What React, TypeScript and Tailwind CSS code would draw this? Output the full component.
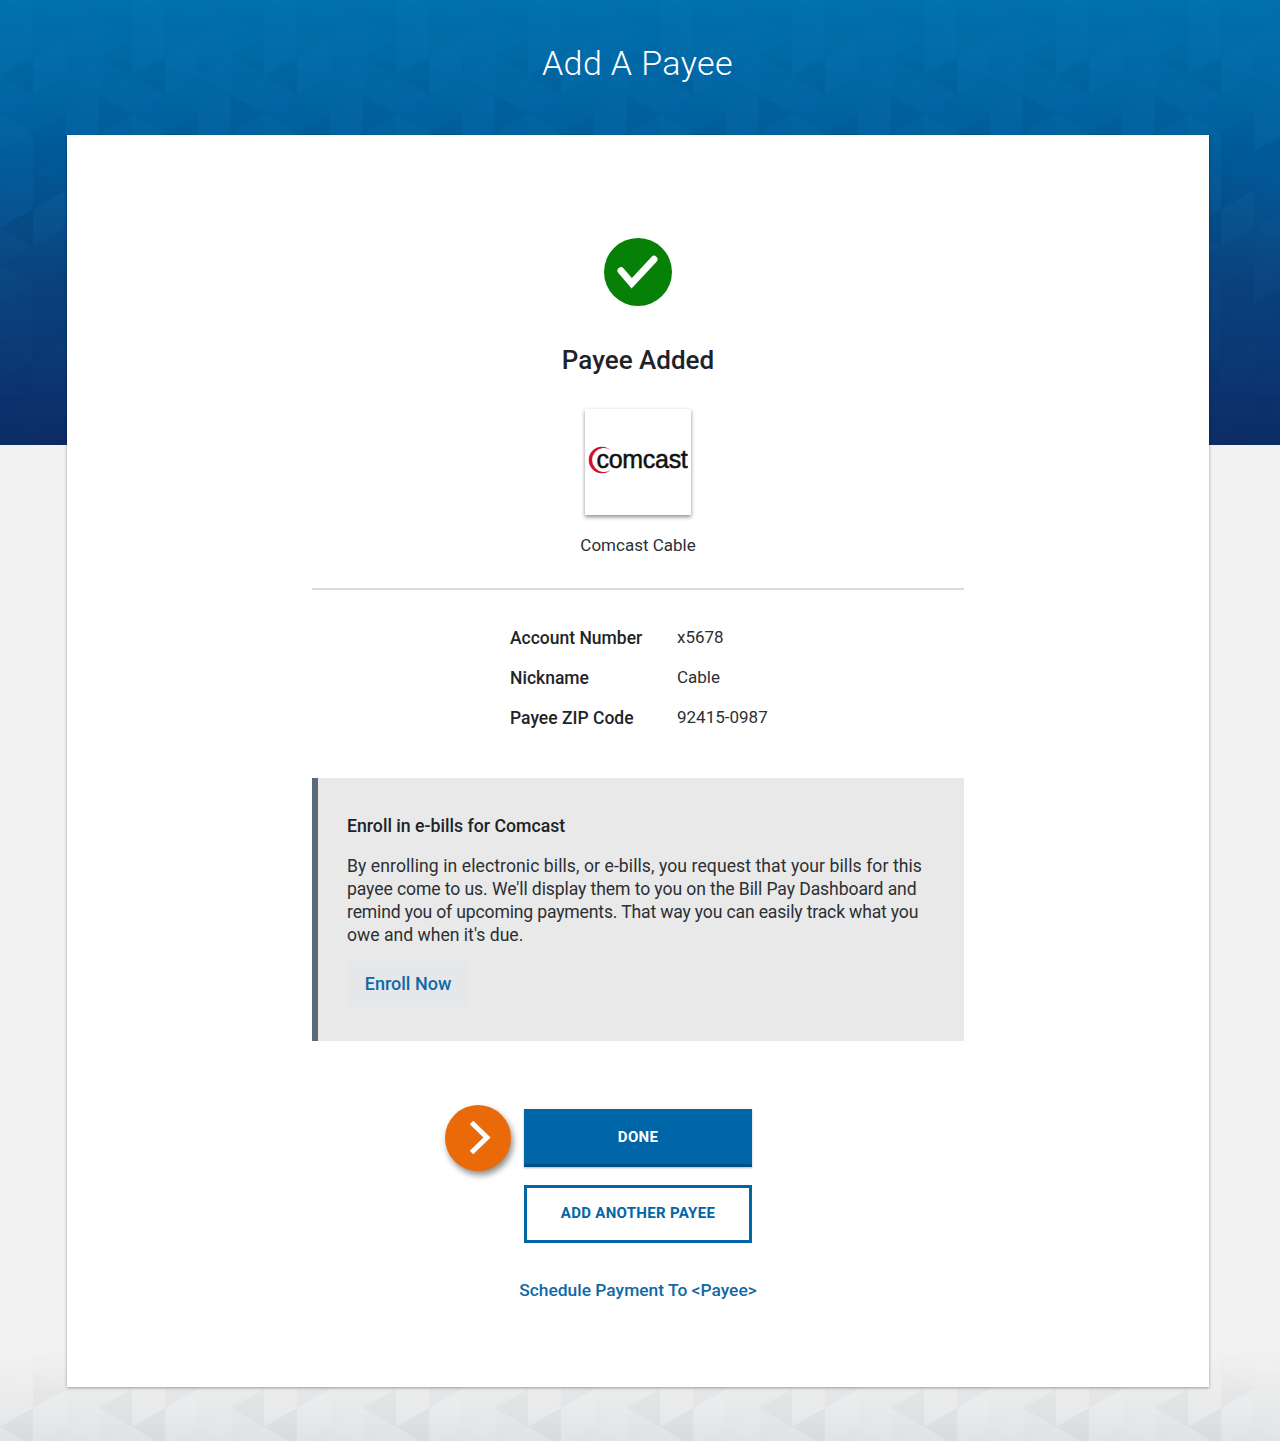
import React from "react";

function rnd(i: number, j: number) {
  const s = Math.sin(i * 12.9898 + j * 78.233) * 43758.5453;
  return s - Math.floor(s);
}

function Triangles({ width, height, dark, light, strength }: { width: number; height: number; dark: string; light: string; strength: number }) {
  const w = 33;
  const h = 38;
  const polys: React.ReactNode[] = [];
  for (let i = 0; i < Math.ceil(width / w) + 1; i++) {
    const ii = i % 4;
    const off = i % 2 ? -h / 2 : -h;
    for (let j = 0; j < Math.ceil(height / h) + 2; j++) {
      const jj = j % 4;
      const x = i * w;
      const y = off + j * h;
      const a = rnd(ii, jj);
      const b = rnd(ii + 40, jj + 17);
      polys.push(
        <polygon key={`a${i}-${j}`} points={`${x},${y} ${x},${y + h} ${x + w},${y + h / 2}`} fill={a > 0.5 ? dark : light} fillOpacity={Math.abs(a - 0.5) * strength} />,
        <polygon key={`b${i}-${j}`} points={`${x + w},${y + h / 2} ${x + w},${y + h * 1.5} ${x},${y + h}`} fill={b > 0.5 ? dark : light} fillOpacity={Math.abs(b - 0.5) * strength} />
      );
    }
  }
  return (
    <svg width={width} height={height} viewBox={`0 0 ${width} ${height}`} className="block">
      {polys}
    </svg>
  );
}

function Row({ label, value }: { label: string; value: string }) {
  return (
    <div className="flex h-10 items-center">
      <div className="w-[167px] text-[17.5px] font-medium text-[#1f2429]">{label}</div>
      <div className="text-[17px] text-[#2b3034]">{value}</div>
    </div>
  );
}

export default function App() {
  return (
    <div
      className="relative h-[1441px] w-[1280px] overflow-hidden bg-[#f2f2f2]"
      style={{ fontFamily: "Roboto, 'Noto Sans', sans-serif" }}
    >
      <div className="absolute left-0 top-0 h-[445px] w-full bg-[linear-gradient(180deg,#0072ae_0%,#00609f_30%,#0a4580_60%,#0d2c66_100%)]">
        <div className="[mask-image:linear-gradient(180deg,rgba(0,0,0,0.3)_0%,#000_25%,#000_50%,rgba(0,0,0,0.1)_90%)]">
          <Triangles width={1280} height={445} dark="#00204f" light="#3a9ad4" strength={0.12} />
        </div>
      </div>
      <div className="absolute bottom-0 left-0 h-[90px] w-full bg-[linear-gradient(180deg,#f2f2f2_0%,#e8e9ea_60%,#dfe1e3_100%)]">
        <div className="[mask-image:linear-gradient(180deg,transparent_0%,#000_50%)]">
          <Triangles width={1280} height={90} dark="#9a9ea3" light="#ffffff" strength={0.2} />
        </div>
      </div>

      <div className="relative">
        <h1 className="flex h-[135px] items-start justify-center pt-[41px] text-[34px] font-light leading-[45px] tracking-[0.4px] text-white">
          <span className="mr-[5px]">Add A Payee</span>
        </h1>

        <main className="mx-[67px] flex h-[1252px] w-[1142px] flex-col items-center bg-white pt-[103px] shadow-[0_1px_3px_rgba(0,0,0,0.35)]">
          <div className="flex h-[68px] w-[68px] items-center justify-center rounded-full bg-[#068006]">
            <svg width="44" height="44" viewBox="0 0 44 44" fill="none">
              <path d="M5 20.7 L15.7 33.3 L38 9.3" stroke="#fff" strokeWidth="7" strokeLinecap="round" strokeLinejoin="miter" />
            </svg>
          </div>

          <h2 className="mt-[36px] text-[26px] font-medium leading-[36px] text-[#1d2328]">Payee Added</h2>

          <div className="relative mt-[31px] flex h-[106px] w-[106px] items-center justify-center bg-white shadow-[0_2px_4px_rgba(0,0,0,0.45)]">
            <svg width="30" height="30" viewBox="0 0 30 30" className="absolute left-[1px] top-[36px]" fill="none">
              <path d="M25 5.2 A13.3 13.3 0 1 0 25 24.8 A12 12 0 1 1 25 5.2 Z" fill="#d0112f" />
            </svg>
            <span
              className="relative ml-[8px] mt-[-6px] text-[25px] leading-none tracking-[-0.3px] text-[#111] [-webkit-text-stroke:0.5px_#111]"
              style={{ fontFamily: "'Liberation Sans', sans-serif" }}
            >
              comcast
            </span>
          </div>

          <p className="mt-[18px] text-[17px] leading-[24px] text-[#2b3034]">Comcast Cable</p>

          <div className="mt-[31px] h-[2px] w-[652px] bg-[#dcdcdc]" />

          <div className="mt-[28px] w-[652px] pl-[198px]">
            <Row label="Account Number" value="x5678" />
            <Row label="Nickname" value="Cable" />
            <Row label="Payee ZIP Code" value="92415-0987" />
          </div>

          <section className="mt-[40px] h-[263px] w-[652px] border-l-[6px] border-[#5c6b77] bg-[#e9e9e9] pl-[29px] pr-[20px] pt-[36px]">
            <h3 className="text-[17.7px] font-medium leading-[24px] text-[#1d2328]">Enroll in e-bills for Comcast</h3>
            <p className="mt-[17px] whitespace-nowrap text-[17.6px] leading-[23px] text-[#2b3034]">
              <span className="block tracking-[0.07px]">By enrolling in electronic bills, or e-bills, you request that your bills for this</span>
              <span className="block tracking-[-0.1px]">payee come to us. We'll display them to you on the Bill Pay Dashboard and</span>
              <span className="block tracking-[-0.17px]">remind you of upcoming payments. That way you can easily track what you</span>
              <span className="block">owe and when it's due.</span>
            </p>
            <button className="mt-[14px] flex h-[46px] w-[122px] items-center justify-center rounded-[4px] bg-[#e5e7e9] pb-[1px] text-[18px] font-medium text-[#0f69a6]">
              Enroll Now
            </button>
          </section>

          <div className="relative mt-[68px]">
            <button className="flex h-[58px] w-[228px] items-center justify-center border-b-[3px] border-[#004f85] bg-[#0066a8] pt-[2px] text-[15px] font-bold tracking-[0.3px] text-white shadow-[0_1px_2px_rgba(0,0,0,0.3)]">
              DONE
            </button>
            <div className="absolute left-[-79px] top-[-4px] flex h-[66px] w-[66px] items-center justify-center rounded-full bg-[#ea6a0a] shadow-[2px_4px_6px_rgba(0,0,0,0.45)]">
              <svg width="30" height="40" viewBox="0 0 30 40" fill="none" className="ml-[1px]">
                <path d="M7.5 4.5 L23 19.5 L7.5 34.5" stroke="#fff" strokeWidth="5" strokeLinejoin="miter" />
              </svg>
            </div>
          </div>

          <button className="mt-[18px] flex h-[58px] w-[228px] items-center justify-center border-[3px] border-[#0066a8] bg-white pb-[1px] text-[15px] font-bold tracking-[0.3px] text-[#0066a8]">
            ADD ANOTHER PAYEE
          </button>

          <a className="mt-[35px] text-[17.4px] font-medium leading-[24px] text-[#0f69a6]">Schedule Payment To &lt;Payee&gt;</a>
        </main>
      </div>
    </div>
  );
}
